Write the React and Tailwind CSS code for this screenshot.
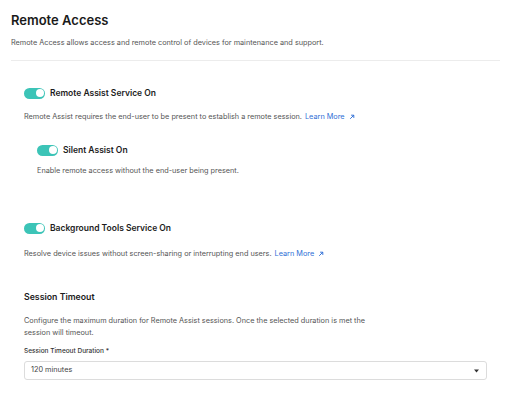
import { useState } from 'react'

// Small teal switch used for the service toggles
function Toggle({ on, onChange }) {
  return (
    <button
      type="button"
      onClick={() => onChange(!on)}
      className={`relative w-[21px] h-[11px] rounded-full shrink-0 ${on ? 'bg-[#3cc4b7]' : 'bg-gray-300'}`}
    >
      <span
        className={`absolute top-[1.5px] w-[8px] h-[8px] rounded-full bg-white ${on ? 'right-[1.5px]' : 'left-[1.5px]'}`}
      />
    </button>
  )
}

function LearnMore() {
  return (
    <a className="text-[#2f6fd6] ml-[3px] inline-flex items-center">
      Learn More
      <svg className="ml-[4px]" width="6" height="6" viewBox="0 0 10 10" fill="none" stroke="currentColor" strokeWidth="1.6">
        <path d="M2 8 L8 2 M3.5 2 H8 V6.5" />
      </svg>
    </a>
  )
}

function ToggleRow({ label, on, onChange }) {
  return (
    <div className="flex items-center gap-[5px] h-[12px]">
      <Toggle on={on} onChange={onChange} />
      <span className="text-[8.5px] font-semibold text-[#1c1c1c]">{label}</span>
    </div>
  )
}

export default function App() {
  const [assist, setAssist] = useState(true)
  const [silent, setSilent] = useState(true)
  const [bg, setBg] = useState(true)

  return (
    <div className="w-[512px] h-[401px] bg-white overflow-hidden font-['Inter',sans-serif] text-[#555]">
      <div className="px-[11px] pt-[10px]">
        <h1 className="text-[13px] font-semibold text-[#1a1a1a] leading-[20px]">Remote Access</h1>
        <p className="text-[7.3px] mt-[7px] leading-[12px]">
          Remote Access allows access and remote control of devices for maintenance and support.
        </p>
        <div className="mt-[11px] border-t border-[#ececec] w-[489px]" />
      </div>

      <div className="px-[24px] pt-[26px]">
        <ToggleRow label="Remote Assist Service On" on={assist} onChange={setAssist} />
        <p className="text-[7.3px] mt-[12px] leading-[12px]">
          Remote Assist requires the end-user to be present to establish a remote session.
          <LearnMore />
        </p>

        <div className="pl-[13px] mt-[21px]">
          <ToggleRow label="Silent Assist On" on={silent} onChange={setSilent} />
          <p className="text-[7.3px] mt-[9px] leading-[12px]">
            Enable remote access without the end-user being present.
          </p>
        </div>

        <div className="mt-[45px]">
          <ToggleRow label="Background Tools Service On" on={bg} onChange={setBg} />
          <p className="text-[7.3px] mt-[14px] leading-[12px]">
            Resolve device issues without screen-sharing or interrupting end users.
            <LearnMore />
          </p>
        </div>

        <h2 className="mt-[31px] text-[8.75px] font-semibold text-[#1c1c1c] leading-[12px]">Session Timeout</h2>
        <p className="text-[7.3px] mt-[12px] leading-[12px] w-[350px]">
          Configure the maximum duration for Remote Assist sessions. Once the selected duration is met the session will timeout.
        </p>
        <label className="block mt-[7px] text-[6.5px] font-medium text-[#333] leading-[10px]">
          Session Timeout Duration *
        </label>
        <div className="mt-[5px] w-[463px] h-[19px] border border-[#dcdcdc] rounded-[3px] flex items-center justify-between pl-[6px] pr-[7px] text-[7.3px] text-[#444]">
          <span>120 minutes</span>
          <svg width="5" height="4" viewBox="0 0 10 6">
            <path d="M0 0 H10 L5 6 Z" fill="#333" />
          </svg>
        </div>
      </div>
    </div>
  )
}
